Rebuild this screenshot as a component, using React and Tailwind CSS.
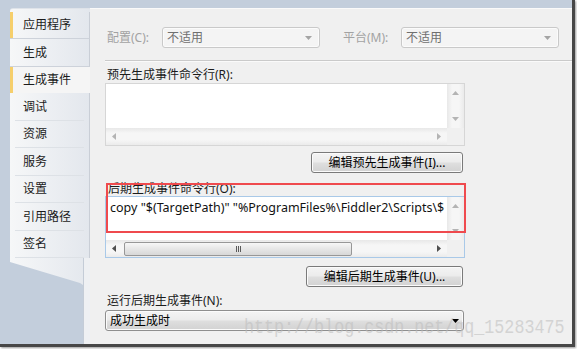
import React from 'react';

const UI = "font-['Noto_Sans','Noto_Sans_CJK_SC',sans-serif]";

const tabs = [
  { name: '应用程序', h: 27, mark: true, boxed: true },
  { name: '生成', h: 28, boxed: true },
  { name: '生成事件', h: 26, mark: true, selected: true },
  { name: '调试', h: 28 },
  { name: '资源', h: 27 },
  { name: '服务', h: 28 },
  { name: '设置', h: 27 },
  { name: '引用路径', h: 28 },
  { name: '签名', h: 27 },
];

const Tri = ({ dir = 'down', color = '#a8a8a8' }) => {
  const pts = {
    down: '0,0 7,0 3.5,4',
    up: '0,4 7,4 3.5,0',
    left: '4,0 4,7 0,3.5',
    right: '0,0 0,7 4,3.5',
  }[dir];
  const vert = dir === 'up' || dir === 'down';
  return (
    <svg width={vert ? 7 : 4} height={vert ? 4 : 7} viewBox={vert ? '0 0 7 4' : '0 0 4 7'}>
      <polygon points={pts} fill={color} />
    </svg>
  );
};

const Tab = ({ t }) => {
  const bg = t.selected
    ? 'bg-[#f5f5f5]'
    : 'bg-[linear-gradient(90deg,#f6f7f8,#e3e7ed)] border-r border-[#c9ced6]';
  return (
    <div style={{ height: t.h }} className={`flex flex-col ${bg} ${t.boxed ? 'border-b border-b-[#cdd2da]' : ''}`}>
      <div
        className={`flex-1 flex items-center text-[12px] text-[#1b1b1b] ${
          t.mark ? 'border-l-[3px] border-l-[#f6cf6c] pl-[10px]' : 'pl-[13px]'
        }`}
      >
        {t.name}
      </div>
      {!t.boxed && !t.selected && <div className="mx-[5px] h-px bg-[#dde1e6]" />}
    </div>
  );
};

const DisabledSelect = ({ value }) => (
  <div className="w-[158px] h-[21px] rounded-[3px] border border-[#c9c9c9] bg-[#f4f4f4] shadow-[inset_0_0_0_1px_#fbfbfb] flex items-center justify-between pl-[4px] pr-[7px]">
    <span className="text-[12px] text-[#6f6f6f]">{value}</span>
    <Tri color="#a4a4a4" />
  </div>
);

const Button = ({ w, children }) => (
  <div
    style={{ width: w }}
    className="h-[21px] rounded-[3px] border border-[#7a7a7a] bg-[linear-gradient(#f4f4f4_0%,#ececec_45%,#dedede_55%,#d2d2d2_100%)] shadow-[inset_0_0_0_1px_#fbfbfb] flex items-center justify-center text-[12px] text-black"
  >
    {children}
  </div>
);

const TextBox = ({ h, border, text, thumb, arrowColor }) => (
  <div
    style={{ height: h }}
    className={`w-[360px] border ${border} bg-white grid grid-cols-[1fr_17px] grid-rows-[1fr_17px] overflow-hidden`}
  >
    <div className="overflow-hidden whitespace-nowrap pl-[4px] pt-[3px] text-[12.5px] leading-[16px] text-[#111]">
      {text}
    </div>
    <div className="bg-[linear-gradient(90deg,#e8e8e8,#f6f6f6_30%,#f6f6f6_70%,#ebebeb)] flex flex-col items-center justify-between py-[7px]">
      <Tri dir="up" color="#b4b4b4" />
      <Tri dir="down" color="#b4b4b4" />
    </div>
    <div className="bg-[linear-gradient(#e8e8e8,#f6f6f6_30%,#f6f6f6_70%,#ebebeb)] flex items-center px-[6px]">
      <Tri dir="left" color={arrowColor} />
      <div className="flex-1 h-full flex items-center pl-[8px] pr-[10px]">
        {thumb && (
          <div className="w-[228px] h-[14px] rounded-[2px] border border-[#979797] bg-[linear-gradient(#f7f7f7,#e6e6e6_50%,#d7d7d7)] flex items-center justify-center gap-[1px]">
            <div className="w-px h-[6px] bg-[#5a5a5a]" />
            <div className="w-px h-[6px] bg-[#5a5a5a]" />
            <div className="w-px h-[6px] bg-[#5a5a5a]" />
          </div>
        )}
      </div>
      <Tri dir="right" color={arrowColor} />
    </div>
    <div className="bg-[#f0f0f0]" />
  </div>
);

export default function App() {
  return (
    <div className={`relative w-[577px] h-[349px] bg-white overflow-hidden ${UI}`}>
      <div className="w-[575px] h-[347px] bg-[#c3cedc] border-r-[3px] border-b-[3px] border-[#474747] shadow-[1px_1px_2px_#9a9a9a] flex flex-col">
        <div className="h-[8px] shrink-0" />
        <div className="flex-1 flex min-h-0">
          {/* left tab strip */}
          <div className="w-[90px] pl-[10px] flex flex-col">
            <div className="w-[80px] flex-1 flex flex-col">
              <div className="h-[4px] rounded-tl-[3px] bg-[linear-gradient(90deg,#f6f7f8,#e3e7ed)] border-t border-[#dfe3e9]" />
              {tabs.map((t) => (
                <Tab key={t.name} t={t} />
              ))}
              <div className="flex-1 bg-[linear-gradient(90deg,#f6f7f8,#e3e7ed)] [clip-path:polygon(0_0,100%_0,100%_100%,73px_100%,73px_27px,70px_25px,0_4px)] flex justify-end">
                <div className="w-[7px] h-full border-l border-[#c4ccd7] bg-[#eef0f3]" />
              </div>
            </div>
          </div>

          {/* main panel */}
          <div className="relative flex-1 bg-[#f0f0f0] border-t border-[#fafafa] pl-[15px] pt-[18px]">
            <div className="flex items-center h-[21px]">
              <span className="w-[57px] pl-[2px] text-[12px] text-[#a2a2a2]">配置(C):</span>
              <DisabledSelect value="不适用" />
              <span className="ml-[23px] w-[58px] text-[12px] text-[#a2a2a2]">平台(M):</span>
              <DisabledSelect value="不适用" />
            </div>
            <div className="mt-[12px] h-px bg-[#cacaca] border-b border-[#fafafa] box-content" />

            <div className="mt-[5px] h-[16px] leading-[16px] pl-[2px] text-[12px] text-[#1b1b1b]">预先生成事件命令行(R):</div>
            <TextBox h={63} border="border-[#d6d6d6]" arrowColor="#b4b4b4" />
            <div className="w-[360px] flex justify-end pr-[2px] mt-[6px]">
              <Button w={152}>编辑预先生成事件(I)...</Button>
            </div>

            <div className="mt-[8px] h-[15px] leading-[15px] pl-[3px] text-[12px] text-[#1b1b1b]">后期生成事件命令行(O):</div>
            <TextBox
              h={62}
              border="border-[#a9c9e8]"
              arrowColor="#4f4f4f"
              thumb
              text={'copy "$(TargetPath)" "%ProgramFiles%\\Fiddler2\\Scripts\\$'}
            />
            <div className="w-[360px] flex justify-end pr-[2px] mt-[8px]">
              <Button w={157}>编辑后期生成事件(U)...</Button>
            </div>

            <div className="mt-[6px] h-[16px] leading-[16px] pl-[2px] text-[12px] text-[#1b1b1b]">运行后期生成事件(N):</div>
            <div className="mt-[1px] w-[359px] h-[21px] rounded-[3px] border border-[#8e8e8e] bg-[linear-gradient(#f4f4f4_0%,#ececec_45%,#dedede_55%,#d2d2d2_100%)] shadow-[inset_0_0_0_1px_#fbfbfb] flex items-center justify-between pl-[4px] pr-[4px]">
              <span className="text-[12px] text-black">成功生成时</span>
              <Tri color="#000" />
            </div>

            {/* red annotation box */}
            <div className="absolute left-[16px] top-[174px] w-[360px] h-[50px] border-2 border-[#ef4a4e] pointer-events-none" />
          </div>
        </div>
      </div>

      {/* watermark */}
      <div className="absolute left-[244px] top-[319px] font-['Liberation_Mono',monospace] text-[16.7px] leading-[22px] text-[#bdbdbd] opacity-55 scale-y-120 origin-bottom whitespace-nowrap pointer-events-none">
        http://blog.csdn.net/qq_15283475
      </div>
    </div>
  );
}
